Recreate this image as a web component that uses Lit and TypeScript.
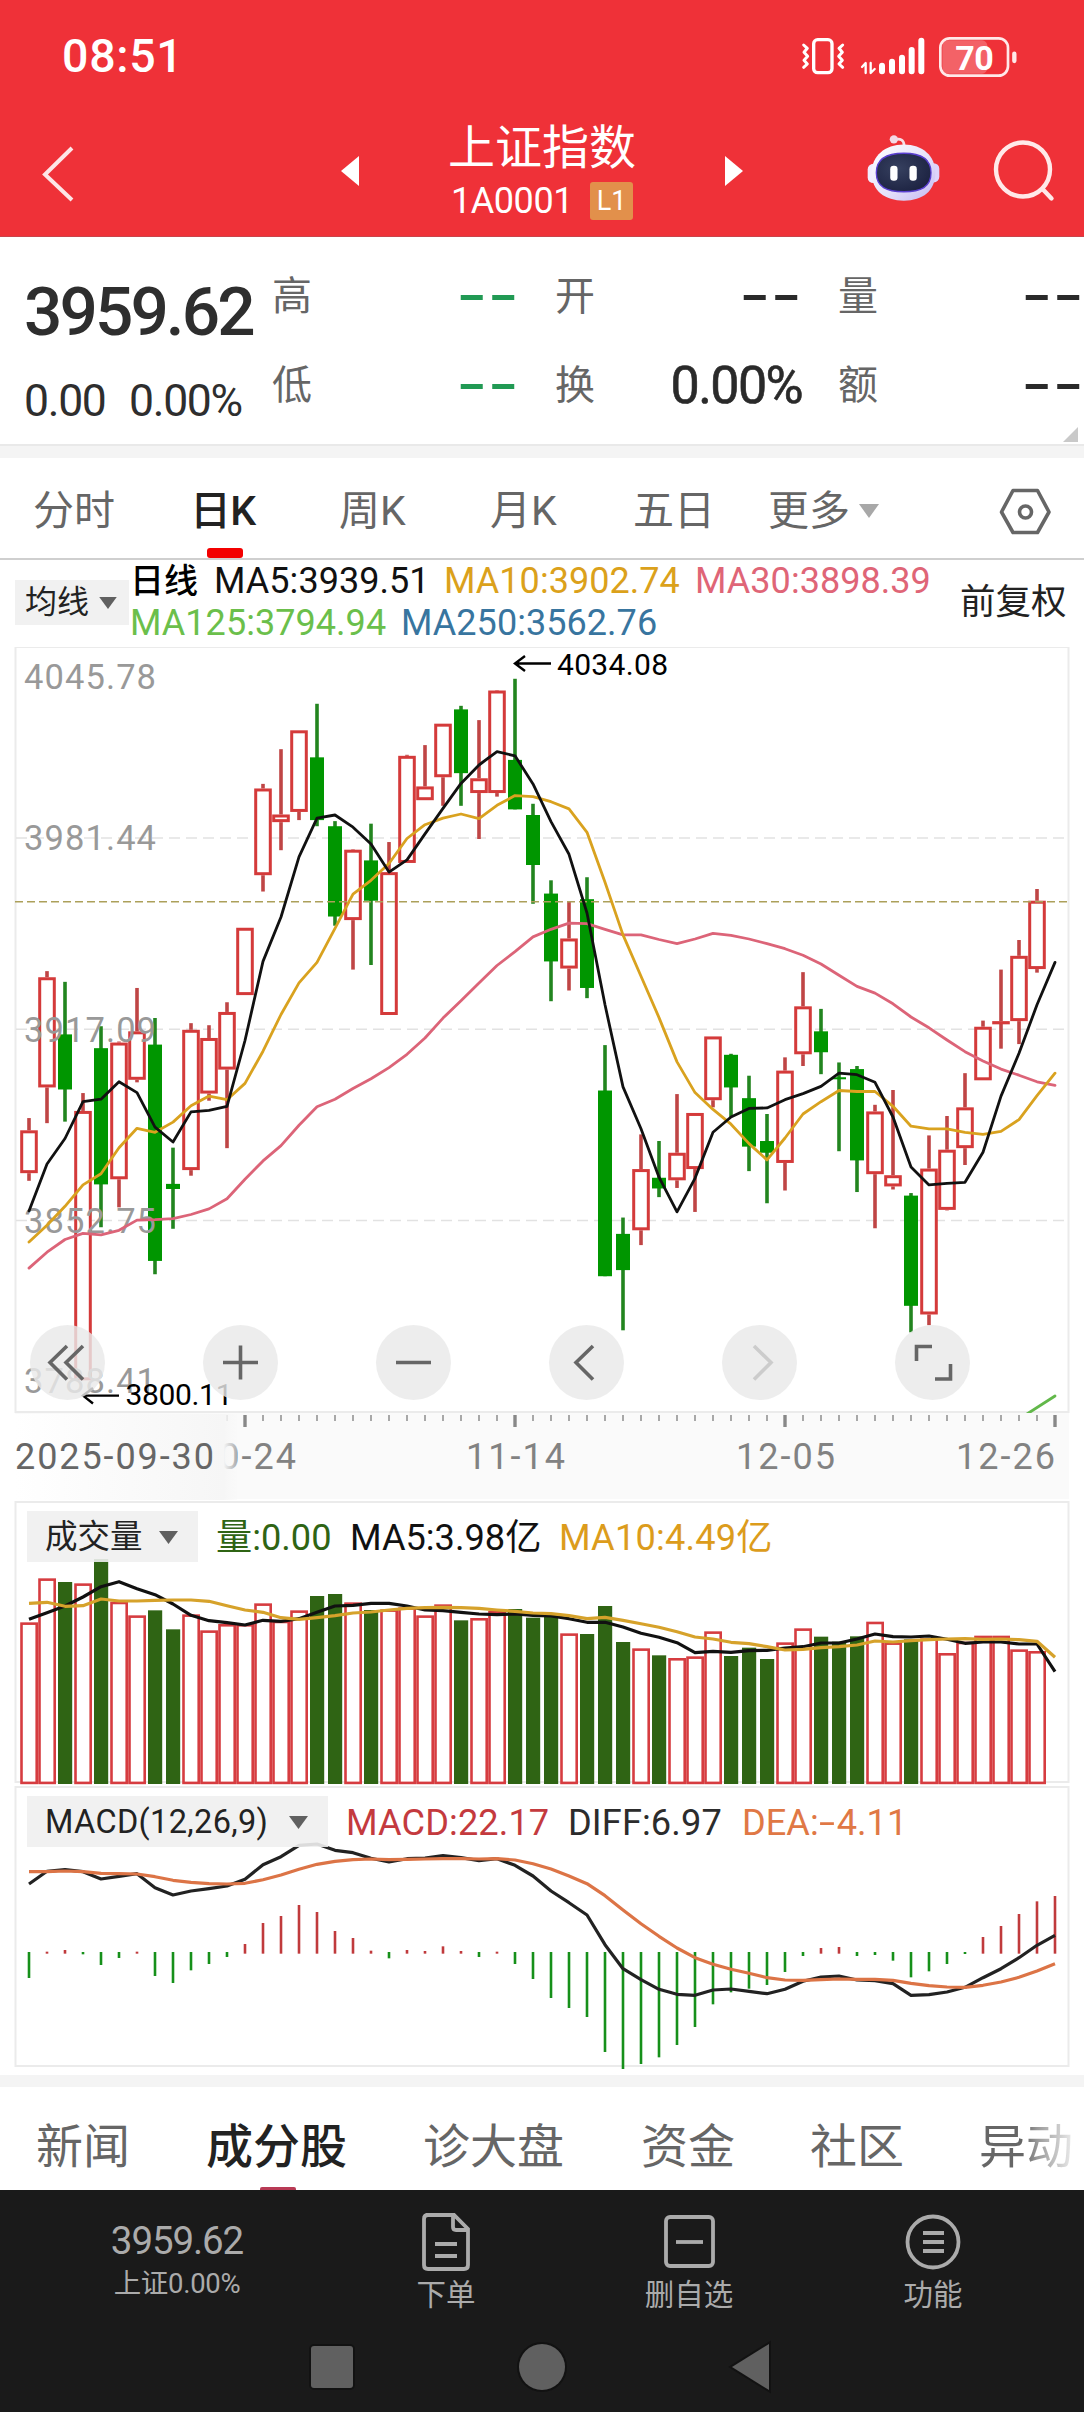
import { LitElement, html, css, svg } from "lit";
import { customElement } from "lit/decorators.js";

/* Horizontal pitch of one trading day, shared by the three charts. */
const PITCH = 18;
const FIRST_X = 29;
const xAt = (i: number) => FIRST_X + i * PITCH;

/* [rising, high, body top, body bottom, low] in chart units (1.96 per pixel). */
type Candle = [number, number, number, number, number];
const CANDLES: Candle[] = [
  [1, 937, 961, 1045, 1060], [1, 649, 661, 877, 947], [0, 670, 773, 881, 944],
  [1, 888, 923, 1451, 1451], [0, 757, 800, 1067, 1151], [1, 787, 789, 1057, 1112],
  [1, 682, 767, 862, 867], [0, 741, 793, 1217, 1243], [0, 995, 1066, 1076, 1154],
  [1, 751, 764, 1039, 1050], [1, 755, 780, 889, 903], [1, 710, 729, 842, 996],
  [1, 564, 564, 696, 696], [1, 282, 291, 461, 493], [1, 214, 342, 357, 412],
  [1, 177, 177, 337, 353], [0, 125, 230, 353, 365], [0, 355, 365, 542, 560],
  [1, 410, 411, 549, 646], [0, 360, 432, 511, 637], [1, 396, 455, 735, 735],
  [1, 225, 227, 437, 437], [1, 206, 287, 314, 314], [1, 164, 164, 269, 325],
  [0, 129, 136, 261, 325], [1, 157, 271, 300, 390], [1, 98, 99, 300, 307],
  [0, 76, 235, 332, 332], [0, 321, 343, 441, 517], [0, 471, 497, 630, 708],
  [1, 513, 585, 644, 687], [0, 465, 508, 682, 702], [0, 794, 883, 1247, 1247],
  [0, 1132, 1164, 1235, 1353], [1, 969, 1037, 1157, 1186], [0, 982, 1054, 1075, 1092],
  [1, 890, 1005, 1059, 1074], [1, 927, 927, 1037, 1121], [1, 777, 777, 902, 916],
  [0, 811, 813, 877, 935], [0, 854, 898, 993, 1041], [0, 929, 982, 1005, 1104],
  [1, 818, 844, 1025, 1079], [1, 651, 718, 812, 835], [0, 723, 767, 808, 851],
  [0, 828, 857, 861, 1002], [0, 835, 841, 1020, 1082], [1, 911, 924, 1047, 1153],
  [1, 882, 1049, 1071, 1077], [0, 1084, 1089, 1305, 1357], [1, 971, 1036, 1322, 1343],
  [1, 933, 999, 1117, 1118], [1, 849, 916, 996, 1029], [1, 746, 758, 863, 863],
  [1, 646, 747, 752, 801], [1, 588, 619, 747, 792], [1, 488, 511, 645, 652],
];
const MA5 = [1119, 1027, 977, 905, 900, 866, 887, 955, 984, 925, 922, 914, 785, 630, 543, 425, 349, 343, 367, 400, 455, 431, 380, 330, 281, 245, 219, 227, 282, 356, 420, 535, 715, 876, 958, 1053, 1121, 1055, 965, 935, 918, 917, 901, 889, 875, 849, 852, 867, 935, 1033, 1068, 1065, 1063, 1004, 894, 810, 715, 632];
const MA10 = [1180, 1147, 1110, 1068, 1046, 995, 957, 965, 945, 913, 894, 901, 869, 806, 734, 672, 632, 565, 498, 471, 438, 389, 362, 349, 341, 350, 324, 305, 307, 317, 331, 377, 475, 578, 659, 740, 827, 887, 920, 949, 987, 1019, 976, 929, 905, 883, 885, 885, 914, 953, 958, 958, 965, 969, 963, 940, 893, 849];
const MA30 = [1231, 1200, 1175, 1163, 1166, 1157, 1137, 1136, 1134, 1126, 1115, 1095, 1057, 1021, 991, 951, 915, 900, 879, 860, 838, 812, 780, 741, 707, 672, 638, 611, 582, 567, 555, 556, 567, 578, 578, 587, 595, 586, 575, 579, 586, 595, 605, 618, 635, 657, 679, 692, 713, 739, 760, 784, 807, 825, 841, 853, 866, 873];

/* Volume bar tops and averages, in thirds of a pixel. */
const VOL = [367, 235, 246, 250, 177, 305, 346, 331, 388, 343, 391, 372, 372, 310, 362, 331, 288, 282, 307, 330, 328, 322, 346, 313, 361, 354, 333, 327, 353, 346, 400, 402, 318, 426, 445, 466, 474, 469, 394, 468, 443, 477, 427, 385, 410, 425, 409, 365, 427, 418, 415, 459, 425, 407, 407, 448, 453];
const VOL5 = [358, 338, 318, 291, 260, 245, 266, 284, 312, 346, 362, 368, 375, 361, 364, 356, 337, 318, 316, 310, 310, 318, 330, 332, 337, 342, 344, 342, 346, 348, 356, 367, 367, 381, 400, 412, 428, 458, 454, 457, 452, 451, 444, 440, 429, 429, 417, 402, 410, 411, 408, 418, 430, 426, 426, 432, 432, 515];
const VOL10 = [310, 307, 319, 317, 297, 303, 303, 301, 300, 300, 304, 317, 330, 337, 353, 358, 353, 347, 339, 336, 330, 325, 323, 322, 323, 325, 330, 334, 339, 341, 347, 356, 352, 361, 371, 382, 395, 411, 417, 427, 431, 440, 450, 448, 443, 440, 435, 423, 426, 422, 419, 417, 416, 418, 417, 419, 424, 472];
const VOL_DOWN = new Set([2, 4, 7, 8, 16, 17, 19, 24, 27, 28, 29, 31, 32, 33, 35, 39, 40, 41, 44, 45, 46, 49]);

/* MACD histogram and lines, in thirds of a pixel; 518 is the zero line. */
const HIST = [594, 515, 510, 523, 555, 534, 515, 588, 609, 571, 552, 531, 492, 429, 408, 375, 396, 453, 474, 512, 535, 510, 513, 499, 513, 531, 515, 552, 597, 654, 684, 711, 816, 867, 852, 832, 795, 741, 673, 637, 626, 615, 576, 528, 504, 501, 528, 525, 542, 592, 574, 552, 522, 471, 438, 402, 364, 348];
const DIFF = [312, 274, 269, 275, 297, 289, 281, 323, 345, 333, 326, 318, 298, 254, 230, 196, 192, 211, 218, 235, 246, 236, 234, 227, 233, 242, 236, 256, 288, 333, 368, 405, 494, 566, 599, 628, 643, 646, 630, 627, 634, 641, 628, 604, 591, 588, 600, 602, 611, 646, 644, 636, 622, 593, 566, 533, 496, 466];
const DEA = [275, 275, 273, 275, 280, 281, 282, 290, 301, 307, 311, 312, 310, 299, 285, 268, 253, 244, 239, 237, 239, 238, 237, 236, 236, 237, 236, 240, 251, 267, 288, 311, 347, 390, 431, 469, 504, 533, 553, 568, 580, 593, 600, 601, 599, 597, 598, 598, 601, 610, 617, 621, 622, 616, 606, 592, 573, 551];

const yK = (v: number) => v / 1.96 - 7;
const yVol = (v: number) => v / 3 - 1;
const yMacd = (v: number) => v / 3 - 6;
const points = (data: number[], y: (v: number) => number) =>
  data.map((v, i) => `${xAt(i)},${y(v).toFixed(1)}`).join(" ");

const shared = css`
  * { box-sizing: border-box; }
  :host {
    display: block;
    font-family: Roboto, "Noto Sans CJK SC", sans-serif;
  }
  svg { display: block; }
  text { font-family: Roboto, "Noto Sans CJK SC", sans-serif; }
`;

@customElement("k-chart")
class KChart extends LitElement {
  static styles = [shared, css`
    :host { position: relative; height: 766px; }
    .grid { stroke: #e2e2e2; stroke-width: 1.5; stroke-dasharray: 11 6; }
    .price { stroke: #aca05a; stroke-width: 1.6; stroke-dasharray: 8 4; }
    .frame { fill: none; stroke: #ebebeb; stroke-width: 2; }
    .up { fill: #fff; stroke: #d43a3a; stroke-width: 3; }
    .up-wick { stroke: #bf4545; stroke-width: 3.6; }
    .down { fill: #009600; }
    .down-wick { stroke: #22851f; stroke-width: 3.6; }
    .ma { fill: none; stroke-width: 2.8; stroke-linejoin: round; stroke-linecap: round; }
    .ma5 { stroke: #111; }
    .ma10 { stroke: #d9a21f; }
    .ma30 { stroke: #dc6478; }
    .ma125 { stroke: #62b84a; }
    .scale { font-size: 34.5px; fill: #999; }
    .mark { font-size: 30px; fill: #000; }
    .arrow { fill: none; stroke: #000; stroke-width: 2.4; }
    .tools {
      position: absolute; left: 30px; top: 678px;
      display: flex; gap: 98px;
    }
    .tool {
      width: 75px; height: 75px; border-radius: 50%;
      background: rgba(233, 233, 233, 0.82);
      flex: none;
    }
    .tool path { fill: none; stroke: #666; stroke-width: 3.6; }
    .tool.off path { stroke: #ccc; }
  `];

  private candle([rising, high, top, bottom, low]: Candle, i: number) {
    const x = xAt(i);
    const t = yK(top);
    const h = yK(bottom) - t;
    if (!rising) {
      return svg`
        <line class="down-wick" x1=${x} x2=${x} y1=${yK(high)} y2=${yK(low)}></line>
        <rect class="down" x=${x - 7} y=${t} width="14" height=${h}></rect>`;
    }
    return svg`
      <line class="up-wick" x1=${x} x2=${x} y1=${yK(high)} y2=${t}></line>
      <line class="up-wick" x1=${x} x2=${x} y1=${yK(bottom)} y2=${yK(low)}></line>
      <rect class="up" x=${x - 7.3} y=${t + 1.5} width="14.6" height=${Math.max(h - 3, 0.2)}></rect>`;
  }

  render() {
    const labels: [string, number][] = [
      ["4045.78", 41.5], ["3981.44", 203], ["3917.09", 394.5], ["3852.75", 586], ["3788.41", 746],
    ];
    const tools = [
      "M37 21 20 37.5 37 54.500M53 21 36 37.500 53 54.500",
      "M20 37.500H55M37.500 20.500V54.500",
      "M20 37.500H55",
      "M44 21 27 37.500 44 54.500",
      "M32 21 49 37.500 32 54.500",
      "M21.500 36V21.500H37M40 54H55.500V39",
    ];
    return html`
      <svg width="1084" height="766" viewBox="0 0 1084 766">
        <rect class="frame" x="15.500" y="0" width="1053" height="765"></rect>
        ${[388, 763, 1138].map((v) => svg`<line class="grid" x1="16" x2="1066" y1=${yK(v)} y2=${yK(v)}></line>`)}
        ${CANDLES.map((c, i) => this.candle(c, i))}
        <line class="price" x1="15" x2="1068" y1="254.700" y2="254.700"></line>
        ${labels.map(([t, y]) => svg`<text class="scale" x="24" y=${y} textLength="132">${t}</text>`)}
        <polyline class="ma ma30" points=${points(MA30, yK)}></polyline>
        <polyline class="ma ma10" points=${points(MA10, yK)}></polyline>
        <polyline class="ma ma5" points=${points(MA5, yK)}></polyline>
        <path class="ma ma125" d="M1027 767 1055 749"></path>
        <path class="arrow" d="M551 16.500H516M525 9 515 16.500 525 24"></path>
        <text class="mark" x="557" y="27.500" textLength="111">4034.08</text>
        <path class="arrow" d="M119 748.600H84M93 741 83 748.600 93 756.500"></path>
        <text class="mark" x="125.500" y="758" textLength="107">3800.11</text>
      </svg>
      <div class="tools">
        ${tools.map((d, i) => html`
          <div class=${i === 4 ? "tool off" : "tool"}>
            <svg width="75" height="75" viewBox="0 0 75 75"><path d=${d}></path></svg>
          </div>`)}
      </div>`;
  }
}

@customElement("date-axis")
class DateAxis extends LitElement {
  static styles = [shared, css`
    :host { height: 88px; }
    .back { fill: #fafafa; }
    .small { stroke: #a8a8a8; stroke-width: 2; }
    .big { stroke: #888; stroke-width: 3.4; }
    text { font-size: 36px; fill: #828282; }
    .first { fill: #666; }
  `];
  render() {
    const ticks = Array.from({ length: 47 }, (_, k) => k + 11);
    const dates: [string, number][] = [["10-24", 197], ["11-14", 466], ["12-05", 736], ["12-26", 956]];
    return html`
      <svg width="1084" height="88" viewBox="0 0 1084 88">
        <defs>
          <linearGradient id="veil" x1="0" x2="1">
            <stop offset="0" stop-color="#fff"></stop>
            <stop offset="0.94" stop-color="#f6f6f6"></stop>
            <stop offset="1" stop-color="#f8f8f8" stop-opacity="0.35"></stop>
          </linearGradient>
        </defs>
        <rect class="back" x="15" y="0" width="1054" height="86"></rect>
        ${ticks.map((i) => {
          const big = (i - 12) % 15 === 0;
          return svg`<line class=${big ? "big" : "small"} x1=${xAt(i)} x2=${xAt(i)} y1="2" y2=${big ? 14 : 8}></line>`;
        })}
        ${dates.map(([t, x]) => svg`<text x=${x} y="56" textLength="99">${t}</text>`)}
        <rect fill="url(#veil)" x="15" y="1" width="222" height="86"></rect>
        <text class="first" x="15" y="56" textLength="199">2025-09-30</text>
      </svg>`;
  }
}

const indicatorStyles = css`
  :host { display: grid; grid-template-areas: "cell"; }
  svg.plot, .head { grid-area: cell; }
  .head { display: flex; align-items: flex-start; padding: 10px 0 0 27px; z-index: 1; }
  .picker {
    display: flex; align-items: center; justify-content: space-between;
    height: 51px; background: rgba(240, 240, 240, 0.9); color: #222;
    padding: 1px 20px 0 18px; font-size: 32.5px; line-height: 50px; flex: none;
  }
  .value { font-size: 36.2px; line-height: 51px; margin-top: 1px; flex: none; white-space: nowrap; }
  .frame { fill: none; stroke: #ebebeb; stroke-width: 2; }
  .line { fill: none; stroke-width: 3.2; stroke-linejoin: round; }
`;
const caret = html`<svg width="19" height="13" viewBox="0 0 19 13"><path d="M0 0H19L9.500 13Z" fill="#606060"></path></svg>`;

@customElement("volume-chart")
class VolumeChart extends LitElement {
  static styles = [shared, indicatorStyles, css`
    :host { height: 285px; }
    .up { fill: #fff; stroke: #d63c40; stroke-width: 2.6; }
    .down { fill: #2f6414; }
    .five { stroke: #111; }
    .ten { stroke: #d6a22b; }
    .picker { width: 171px; margin-right: 18px; }
    .v0 { color: #2f6414; width: 134px; }
    .v5 { color: #111; width: 209px; }
    .v10 { color: #dc9c1c; letter-spacing: 0.2px; }
  `];
  render() {
    return html`
      <svg class="plot" width="1084" height="285" viewBox="0 0 1084 285">
        <rect class="frame" x="15.500" y="1" width="1053" height="280"></rect>
        ${VOL.map((v, i) => {
          const y = yVol(v);
          return VOL_DOWN.has(i)
            ? svg`<rect class="down" x=${xAt(i) - 7} y=${y} width="14.200" height=${283 - y}></rect>`
            : svg`<rect class="up" x=${xAt(i) - 7.5} y=${y + 1.3} width="15.200" height=${280.6 - y}></rect>`;
        })}
        <polyline class="line five" points=${points(VOL5, yVol)}></polyline>
        <polyline class="line ten" points=${points(VOL10, yVol)}></polyline>
      </svg>
      <div class="head">
        <div class="picker"><span>成交量</span>${caret}</div>
        <div class="value v0">量:0.00</div>
        <div class="value v5">MA5:3.98亿</div>
        <div class="value v10">MA10:4.49亿</div>
      </div>`;
  }
}

@customElement("macd-chart")
class MacdChart extends LitElement {
  static styles = [shared, indicatorStyles, css`
    :host { height: 289px; }
    .pos { stroke: #c03a3c; stroke-width: 2.6; }
    .neg { stroke: #16901a; stroke-width: 2.6; }
    .diff { stroke: #222; }
    .dea { stroke: #dc7446; }
    .picker { width: 301px; margin-right: 18px; letter-spacing: 0.35px; }
    .m { color: #c43a3e; width: 222px; letter-spacing: 0.1px; }
    .d { color: #2c2c2c; width: 174px; letter-spacing: 0.1px; }
    .e { color: #e07845; }
    .minus { display: inline-block; transform: scaleX(1.6); margin: 0 5px 0 3px; }
  `];
  render() {
    return html`
      <svg class="plot" width="1084" height="289" viewBox="0 0 1084 289">
        <rect class="frame" x="15.500" y="1" width="1053" height="279"></rect>
        ${HIST.map((v, i) => {
          const up = v < 518;
          return svg`<line class=${up ? "pos" : "neg"} x1=${xAt(i)} x2=${xAt(i)} y1=${yMacd(up ? 521 : 516)} y2=${yMacd(v)}></line>`;
        })}
        <polyline class="line diff" points=${points(DIFF, yMacd)}></polyline>
        <polyline class="line dea" points=${points(DEA, yMacd)}></polyline>
      </svg>
      <div class="head">
        <div class="picker"><span>MACD(12,26,9)</span>${caret}</div>
        <div class="value m">MACD:22.17</div>
        <div class="value d">DIFF:6.97</div>
        <div class="value e">DEA:<span class="minus">-</span>4.11</div>
      </div>`;
  }
}

@customElement("app-root")
class AppRoot extends LitElement {
  static styles = [shared, css`
    :host { width: 1084px; height: 2412px; overflow: hidden; background: #fff; color: #333; }

    .status {
      height: 112px; background: #ef3138; color: #fff;
      display: flex; justify-content: space-between; padding: 25px 4px 0 62px;
    }
    .clock { font-size: 46.5px; line-height: 62px; letter-spacing: 0.7px; font-weight: 500; }
    .header {
      height: 125px; background: #ef3138; color: #fff;
      display: grid; grid-template-columns: 341px 18px 366px 18px 124px 73px 1fr;
      align-items: start; border-bottom: 1px solid #c9434a;
    }
    .back { margin: 34px 0 0 42px; }
    .tri { margin-top: 44px; }
    .title { text-align: center; }
    .name { font-size: 47px; line-height: 56px; margin-top: 8px; }
    .code { display: flex; justify-content: center; align-items: center; font-size: 36px; line-height: 38px; letter-spacing: -0.4px; margin-top: 6px; gap: 17px; }
    .level { width: 43px; height: 38px; border-radius: 3px; background: #e2904b; font-size: 27px; line-height: 38px; letter-spacing: 0; }
    .bot { margin-top: 22px; }
    .search { margin: 27px 0 0 53px; }

    .quote {
      height: 209px; border-bottom: 2px solid #e9e9e9;
      display: grid; grid-template-columns: 272px 283px 283px 246px; position: relative;
    }
    .main { padding: 39px 0 0 24px; color: #2e2e2e; }
    .last { font-size: 67.5px; font-weight: 500; line-height: 72px; letter-spacing: -2.9px; }
    .change { display: flex; font-size: 44.5px; line-height: 50px; letter-spacing: -1.3px; margin-top: 28px; }
    .change span:first-child { width: 105px; }
    .pair { display: flex; justify-content: space-between; align-items: center; height: 89px; }
    .pair:first-child { margin-top: 13px; }
    .pair span { font-size: 40px; line-height: 60px; color: #666; position: relative; top: 2px; }
    .pair b { font-size: 52px; line-height: 60px; font-weight: 400; letter-spacing: -1.6px; color: #2a2a2a; -webkit-text-stroke: 0.6px #2a2a2a; position: relative; top: 2px; }
    .pair b.none {
      font-family: Inter, sans-serif; font-size: 54px; font-weight: 500; letter-spacing: 0;
      transform: scaleX(1.26); transform-origin: right; top: 0; -webkit-text-stroke: 0;
    }
    .pair b.green { color: #219a54; }
    .c1 { padding-right: 36px; }
    .c2 { padding-right: 36px; }
    .corner { position: absolute; right: 6px; bottom: 2px; }
    .band { height: 12px; background: #f4f4f4; }

    .tabs {
      height: 102px; border-bottom: 2px solid #cfcfcf; color: #666;
      display: grid; grid-template-columns: 157px 149px 151px 143px 135px 230px 1fr;
      padding-left: 33px; font-size: 41px; line-height: 98px; white-space: nowrap;
    }
    .tab { height: 102px; padding-top: 3px; display: flex; align-items: center; position: relative; }
    .tab.on { color: #222; font-weight: 500; letter-spacing: -0.8px; }
    .tab.on::after {
      content: ""; position: absolute; left: 17px; bottom: 2px;
      width: 36px; height: 10px; border-radius: 3px; background: #f30000;
    }
    .more { gap: 9px; }

    .legend {
      height: 87px; display: grid; grid-template-columns: 114px 1px 815px 1fr;
      padding-left: 15px; font-size: 36px;
    }
    .avg {
      height: 45px; margin-top: 20px; background: #f1f1f1; color: #222;
      display: flex; align-items: center; justify-content: space-between;
      padding: 0 12px 0 10px; font-size: 32px; line-height: 45px;
    }
    .avg svg { width: 18px; height: 12px; }
    .mas { letter-spacing: 0.05px; }
    .row { display: grid; grid-template-columns: 84px 230px 251px 1fr; line-height: 42px; height: 42px; }
    .row.two { grid-template-columns: 271px 1fr; letter-spacing: 0.05px; }
    .day { font-size: 34px; font-weight: 500; color: #000; }
    .k5 { color: #111; } .k10 { color: #dba11b; } .k30 { color: #df6577; }
    .k125 { color: #6bbf4b; } .k250 { color: #38759f; }
    .adjust { font-size: 35.5px; line-height: 42px; margin-top: 21px; padding-left: 15px; color: #222; white-space: nowrap; }

    .sections {
      height: 103px; display: grid; grid-template-columns: 170px 217px 218px 169px 169px 1fr;
      padding-left: 36px; font-size: 47px; line-height: 120px; color: #666; white-space: nowrap; overflow: hidden;
    }
    .section.on { color: #222; font-weight: 500; position: relative; }
    .section.on::after {
      content: ""; position: absolute; left: 54px; top: 100px;
      width: 36px; height: 6px; border-radius: 2px; background: #b83a55;
    }
    .section.fade { color: transparent; background: linear-gradient(90deg, #666 45px, #999 58px, #eee 95px); background-clip: text; -webkit-background-clip: text; }

    .dock {
      height: 126px; background: #1a1a1a; color: #ababab;
      display: grid; grid-template-columns: 354px 184px 302px 186px 1fr;
    }
    .index { text-align: center; padding-top: 31px; }
    .index .n { font-size: 38.5px; line-height: 40px; letter-spacing: -1.1px; }
    .index .s { font-size: 27.5px; line-height: 30px; margin-top: 8px; letter-spacing: -0.3px; }
    .act { display: flex; flex-direction: column; align-items: center; padding-top: 21px; font-size: 29.5px; }
    .act svg { fill: none; stroke: #ababab; stroke-width: 3.8; }
    .act span { line-height: 34px; margin-top: 5px; }
    .nav { height: 96px; background: #1a1a1a; display: flex; padding: 22px 0 0 306px; gap: 156px; }
    .nav svg { fill: #606060; stroke: #121212; stroke-width: 4; paint-order: stroke; }
  `];

  private pair(label: string, value: string, tone = "") {
    return html`<div class="pair"><span>${label}</span><b class=${value === "--" ? `none ${tone}` : ""}>${value}</b></div>`;
  }

  private action(icon: unknown, label: string) {
    return html`<div class="act"><svg width="60" height="62" viewBox="0 0 60 62">${icon}</svg><span>${label}</span></div>`;
  }

  render() {
    return html`
      <div class="status">
        <div class="clock">08:51</div>
        <svg width="300" height="63" viewBox="0 0 900 189" fill="none" stroke="#fff" stroke-linecap="round" stroke-linejoin="round">
          <rect x="101" y="44" width="55" height="99" rx="12" stroke-width="10"></rect>
          <path stroke-width="9" d="M71 60 82 70 72 82 83 94 72 106 82 117 71 127M188 60 177 70 187 82 176 94 187 106 177 117 188 127"></path>
          <path stroke-width="7" d="M246 126 257 114V144M272 114V144L284 132"></path>
          <path stroke-width="18" d="M306 122V139M336 110V139M366 98V139M395 75V139M424 47V139"></path>
          <rect x="487" y="46" width="135" height="100" rx="16" fill="#fff" fill-opacity="0.24" stroke="none"></rect>
          <rect x="481" y="40" width="203" height="112" rx="28" stroke-width="8" stroke="#ffe9e9"></rect>
          <path stroke-width="13" stroke="#ffe9e9" d="M703 86V108"></path>
          <text x="526" y="134" font-size="102" font-weight="700" fill="#fff" stroke="none" textLength="115">70</text>
        </svg>
      </div>

      <div class="header">
        <svg class="back" width="34" height="56" viewBox="0 0 34 56" fill="none" stroke="#fff" stroke-opacity="0.88" stroke-width="4"><path d="M30 2 3 28.500 30 54"></path></svg>
        <svg class="tri" width="18" height="30" viewBox="0 0 18 30"><path d="M18 0V30L0 15Z" fill="#fff"></path></svg>
        <div class="title">
          <div class="name">上证指数</div>
          <div class="code"><span>1A0001</span><span class="level">L1</span></div>
        </div>
        <svg class="tri" width="18" height="30" viewBox="0 0 18 30"><path d="M0 0V30L18 15Z" fill="#fff"></path></svg>
        <span></span>
        <svg class="bot" width="73" height="68" viewBox="262 328 220 205">
          <defs>
            <linearGradient id="shell" x1="0" y1="0" x2="1" y2="1">
              <stop offset="0" stop-color="#fff"></stop><stop offset="0.55" stop-color="#e6e2fa"></stop><stop offset="1" stop-color="#c3b8f2"></stop>
            </linearGradient>
            <radialGradient id="visor" cx="0.4" cy="0.4" r="0.7">
              <stop offset="0" stop-color="#36405f"></stop><stop offset="1" stop-color="#1b2140"></stop>
            </radialGradient>
          </defs>
          <path d="M345 345Q372 338 374 362" fill="none" stroke="#f6dfe6" stroke-width="8"></path>
          <circle cx="343" cy="344" r="12.500" fill="#f3d9e6"></circle>
          <rect x="264" y="418" width="36" height="58" rx="17" fill="#f1edff"></rect>
          <rect x="444" y="416" width="36" height="58" rx="17" fill="#ddd4fb"></rect>
          <path d="M373 360C430 360 468 395 468 445C468 500 430 529 373 529C316 529 276 500 276 445C276 395 316 360 373 360Z" fill="url(#shell)"></path>
          <path d="M373 386C425 386 455 402 455 445C455 488 425 502 373 502C321 502 290 488 290 445C290 402 321 386 373 386Z" fill="url(#visor)" stroke="#5a3fd0" stroke-width="4"></path>
          <rect x="332" y="424" width="22" height="45" rx="10" fill="#fff"></rect>
          <rect x="390" y="424" width="22" height="45" rx="10" fill="#fff"></rect>
        </svg>
        <svg class="search" width="64" height="64" viewBox="0 0 64 64" fill="none" stroke="#ffe9e9" stroke-width="4.400" stroke-linecap="round">
          <circle cx="30" cy="30.500" r="27"></circle><path d="M50 50.500 58.500 59.500"></path>
        </svg>
      </div>

      <div class="quote">
        <div class="main">
          <div class="last">3959.62</div>
          <div class="change"><span>0.00</span><span>0.00%</span></div>
        </div>
        <div class="c1">${this.pair("高", "--", "green")}${this.pair("低", "--", "green")}</div>
        <div class="c2">${this.pair("开", "--")}${this.pair("换", "0.00%")}</div>
        <div>${this.pair("量", "--")}${this.pair("额", "--")}</div>
        <svg class="corner" width="15" height="15" viewBox="0 0 15 15"><path d="M15 0V15H0Z" fill="#c9c9c9"></path></svg>
      </div>
      <div class="band"></div>

      <div class="tabs">
        <div class="tab">分时</div>
        <div class="tab on">日K</div>
        <div class="tab">周K</div>
        <div class="tab">月K</div>
        <div class="tab">五日</div>
        <div class="tab more">更多<svg width="20" height="14" viewBox="0 0 20 14"><path d="M0 0H20L10 14Z" fill="#a8a8a8"></path></svg></div>
        <div class="tab">
          <svg width="54" height="50" viewBox="0 0 54 50" fill="none" stroke="#666" stroke-width="3.600" stroke-linejoin="round">
            <path d="M15 4.500H39.500L51 26 39.500 46.500H15L3.500 26Z"></path><circle cx="27.500" cy="26" r="6"></circle>
          </svg>
        </div>
      </div>

      <div class="legend">
        <div class="avg"><span>均线</span>${caret}</div>
        <span></span>
        <div class="mas">
          <div class="row"><span class="day">日线</span><span class="k5">MA5:3939.51</span><span class="k10">MA10:3902.74</span><span class="k30">MA30:3898.39</span></div>
          <div class="row two"><span class="k125">MA125:3794.94</span><span class="k250">MA250:3562.76</span></div>
        </div>
        <div class="adjust">前复权</div>
      </div>

      <k-chart></k-chart>
      <date-axis></date-axis>
      <volume-chart></volume-chart>
      <macd-chart></macd-chart>
      <div class="band"></div>

      <div class="sections">
        <div class="section">新闻</div>
        <div class="section on">成分股</div>
        <div class="section">诊大盘</div>
        <div class="section">资金</div>
        <div class="section">社区</div>
        <div class="section fade">异动</div>
      </div>

      <div class="dock">
        <div class="index"><div class="n">3959.62</div><div class="s">上证0.00%</div></div>
        ${this.action(svg`<path d="M10 4H38L52 18V54Q52 58 48 58H12Q8 58 8 54V8Q8 4 12 4M37 4V16Q37 19 40 19H52M19 33H41M19 45H41"></path>`, "下单")}
        ${this.action(svg`<rect x="7" y="6" width="47" height="49" rx="4"></rect><path d="M17 31H44"></path>`, "删自选")}
        ${this.action(svg`<circle cx="30" cy="31" r="25.500"></circle><path d="M20 22H41M20 31H41M20 40H41"></path>`, "功能")}
      </div>
      <div class="nav">
        <svg width="54" height="60" viewBox="0 0 54 60"><rect x="5" y="8" width="42" height="42" rx="3"></rect></svg>
        <svg width="54" height="60" viewBox="0 0 54 60"><circle cx="26" cy="29" r="23"></circle></svg>
        <svg width="54" height="60" viewBox="0 0 54 60"><path d="M6 29 43 6V52Z"></path></svg>
      </div>`;
  }
}
